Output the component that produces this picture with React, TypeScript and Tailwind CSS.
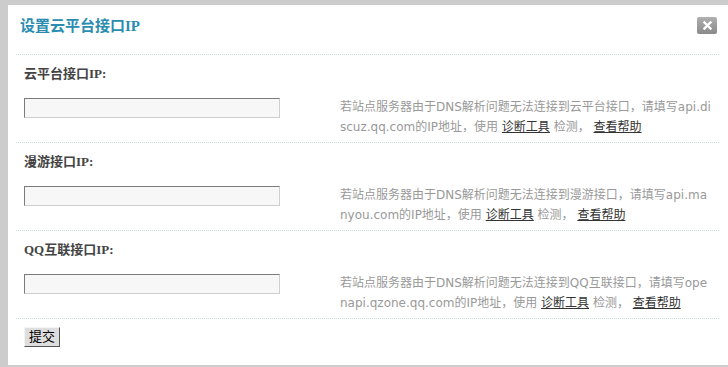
const sections = [
  {
    label: '云平台接口IP:',
    help: '若站点服务器由于DNS解析问题无法连接到云平台接口，请填写api.discuz.qq.com的IP地址，使用',
  },
  {
    label: '漫游接口IP:',
    help: '若站点服务器由于DNS解析问题无法连接到漫游接口，请填写api.manyou.com的IP地址，使用',
  },
  {
    label: 'QQ互联接口IP:',
    help: '若站点服务器由于DNS解析问题无法连接到QQ互联接口，请填写openapi.qzone.qq.com的IP地址，使用',
  },
]

const labelFont = { fontFamily: '"Liberation Serif", "Noto Sans CJK SC", serif' }
const textFont = { fontFamily: 'Verdana, "DejaVu Sans", "Noto Sans CJK SC", sans-serif' }

export default function App() {
  return (
    <div className="w-[728px] h-[367px] bg-[#cccccc] pt-[5px] pl-[8px] pb-[2px] overflow-hidden">
      <div className="h-[360px] bg-white pl-[8px] pr-[9px]">
        {/* Header */}
        <div className="flex justify-between pt-[12px] pb-[19px] border-b border-dotted border-[#cdd9e3]">
          <h3 className="pl-[4px] text-[15px] leading-[18px] font-bold text-[#2a8cb0]" style={labelFont}>
            设置云平台接口IP
          </h3>
          <button
            type="button"
            className="mr-[2px] w-[20px] h-[17px] rounded-[2px] bg-gradient-to-b from-[#b0b0b0] to-[#8a8a8a] flex items-center justify-center"
          >
            <svg width="9" height="9" viewBox="0 0 9 9">
              <path d="M1.5 1.5 L7.5 7.5 M7.5 1.5 L1.5 7.5" stroke="white" strokeWidth="2.4" strokeLinecap="square" />
            </svg>
          </button>
        </div>

        {sections.map(s => (
          <div key={s.label} className="pl-[8px] pt-[9px] pb-[5px] border-b border-dotted border-[#cdd9e3]">
            <div className="text-[13px] leading-[20px] font-bold text-[#444]" style={labelFont}>
              {s.label}
            </div>
            <div className="mt-[13px] flex">
              <div className="w-[316px] shrink-0 pt-[1px]">
                <input
                  type="text"
                  className="block w-[256px] h-[20px] bg-[#f7f7f7] border border-t-[#7b7b7b] border-l-[#7b7b7b] border-b-[#cfcfcf] border-r-[#cfcfcf] outline-none"
                />
              </div>
              <div className="w-[374px] text-[12px] leading-[20px] text-[#999] break-all" style={textFont}>
                {s.help} <a className="text-[#333] underline">诊断工具</a> 检测，{' '}
                <a className="text-[#333] underline">查看帮助</a>
              </div>
            </div>
          </div>
        ))}

        <div className="pl-[8px] pt-[8px]">
          <button
            type="button"
            className="block w-[36px] h-[20px] bg-[#dedede] border border-t-[#f4f4f4] border-l-[#f4f4f4] border-b-[#555] border-r-[#555] text-[13px] leading-[16px] text-black"
            style={textFont}
          >
            提交
          </button>
        </div>
      </div>
    </div>
  )
}
